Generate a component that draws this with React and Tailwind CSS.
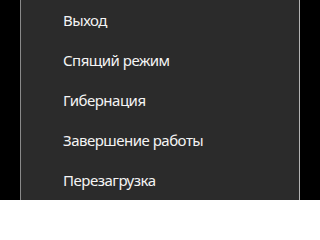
import React from 'react';

const items = ['Выход', 'Спящий режим', 'Гибернация', 'Завершение работы', 'Перезагрузка'];

const App = () => {
  return (
    <div className="w-[320px] h-[200px] bg-black px-[20px] overflow-hidden">
      <div className="h-full bg-[#2b2b2b] border-l border-l-[#8a8a8a] border-r border-r-[#b4b4b4] pl-[42px]">
        {items.map((item) => (
          <div
            key={item}
            className="h-[40px] leading-[40px] text-[15px] tracking-[-0.5px] text-[#f4f4f4] font-['Noto_Sans',sans-serif]"
          >
            {item}
          </div>
        ))}
      </div>
    </div>
  );
};

export default App;
